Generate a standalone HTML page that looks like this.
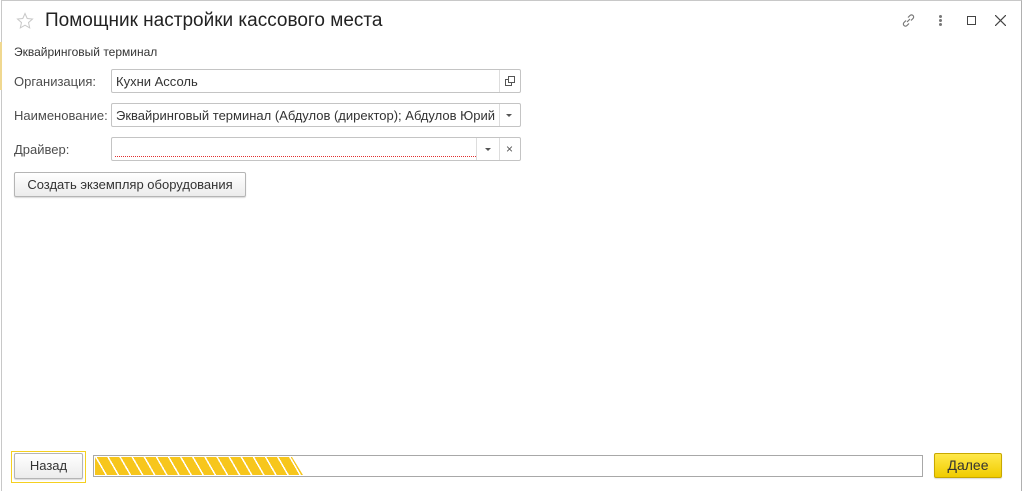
<!DOCTYPE html>
<html><head><meta charset="utf-8"><style>
*{box-sizing:border-box;margin:0;padding:0}
body{width:1032px;height:491px;background:#fff;position:relative;overflow:hidden;font-family:"Liberation Sans",Arial,sans-serif;font-size:13px;color:#404040}
.win{position:absolute;left:1px;top:0;width:1021px;height:491px;border-left:1px solid #c8c8c8;border-right:1px solid #b0b0b0;border-top:1px solid #c8c8c8;background:#fff}
.abs{position:absolute}
.lbl{position:absolute;left:14px;color:#4d4d4d;font-size:13px}
.fld{position:absolute;left:111px;width:410px;height:24px;border:1px solid #c4c4c4;border-radius:2px;background:#fff}
.fld .t{position:absolute;left:4px;top:4px;font-size:13px;color:#333;white-space:nowrap;overflow:hidden}
.btn{position:absolute;border:1px solid #b5b5b5;border-radius:2px;background:linear-gradient(#fff,#ececec);box-shadow:0 1px 1px rgba(0,0,0,.15);color:#333;text-align:center;font-size:13px}
</style></head><body>
<div class="win"></div>
<div class="abs" style="left:0;top:42px;width:2px;height:48px;background:#f0d890"></div>
<svg class="abs" style="left:16px;top:12px" width="18" height="18" viewBox="0 0 18 18"><path d="M9 1.5l2.2 5 5.3.5-4 3.6 1.2 5.3L9 13.2 4.3 15.9l1.2-5.3-4-3.6 5.3-.5z" fill="none" stroke="#c8c8c8" stroke-width="1"/></svg>
<div class="abs" style="left:45px;top:10px;font-size:19px;color:#222">Помощник настройки кассового места</div>
<svg class="abs" style="left:900px;top:12px" width="17" height="17" viewBox="0 0 17 17" fill="none" stroke="#777" stroke-width="1.2"><path d="M7 10l3-3M6 8.5l-2 2a2 2 0 003 3l2-2M11 8.5l2-2a2 2 0 00-3-3l-2 2"/></svg>
<div class="abs" style="left:939px;top:15px;width:3px;height:3px;background:#777;border-radius:50%;box-shadow:0 4px 0 #777,0 8px 0 #777"></div>
<div class="abs" style="left:967px;top:16px;width:9px;height:9px;border:1.3px solid #444"></div>
<svg class="abs" style="left:995px;top:15px" width="11" height="11" viewBox="0 0 11 11" stroke="#444" stroke-width="1.2"><path d="M0 0L11 11M11 0L0 11"/></svg>
<div class="lbl" style="top:45px;color:#333;font-size:12px">Эквайринговый терминал</div>
<div class="lbl" style="top:74px">Организация:</div>
<div class="fld" style="top:69px"><div class="t">Кухни Ассоль</div><div class="abs" style="left:387px;top:0;width:1px;height:22px;background:#ddd"></div>
<svg class="abs" style="left:393px;top:6px" width="10" height="10" viewBox="0 0 10 10" fill="none" stroke="#555"><rect x="3.5" y="0.5" width="6" height="6"/><path d="M3.5 3.5H.5v6h6V6.5"/></svg></div>
<div class="lbl" style="top:108px">Наименование:</div>
<div class="fld" style="top:103px"><div class="t" style="width:382px">Эквайринговый терминал (Абдулов (директор); Абдулов Юрий Евгеньевич)</div><div class="abs" style="left:387px;top:0;width:1px;height:22px;background:#ddd"></div><div class="abs" style="left:394px;top:10px;border:3px solid transparent;border-top:3px solid #555;border-bottom:0"></div></div>
<div class="lbl" style="top:142px">Драйвер:</div>
<div class="fld" style="top:137px"><div class="abs" style="left:3px;top:18px;width:361px;border-top:1px dotted #e03030"></div><div class="abs" style="left:364px;top:0;width:1px;height:22px;background:#ddd"></div><div class="abs" style="left:387px;top:0;width:1px;height:22px;background:#ddd"></div><div class="abs" style="left:373px;top:10px;border:3px solid transparent;border-top:3px solid #555;border-bottom:0"></div><div class="abs" style="left:394px;top:4px;font-size:12px;color:#555">×</div></div>
<div class="btn" style="left:14px;top:172px;width:232px;height:25px;line-height:23px">Создать экземпляр оборудования</div>
<div class="abs" style="left:11px;top:451px;width:75px;height:32px;border:1px solid #f5d020"></div>
<div class="btn" style="left:14px;top:453px;width:69px;height:26px;line-height:24px">Назад</div>
<div class="abs" style="left:93px;top:455px;width:830px;height:22px;border:1px solid #a8a8a8;background:#fff"></div>
<div class="abs" style="left:95px;top:457px;width:208px;height:18px;clip-path:polygon(0 0,197px 0,208px 18px,0 18px);background:repeating-linear-gradient(60deg,#f7c61c 0 9px,#fff 9px 10.5px)"></div>
<div class="btn" style="left:934px;top:453px;width:68px;height:25px;line-height:23px;background:linear-gradient(#ffe84a,#f0cc00);border-color:#c8a800;color:#333;font-size:14px">Далее</div>
</body></html>
